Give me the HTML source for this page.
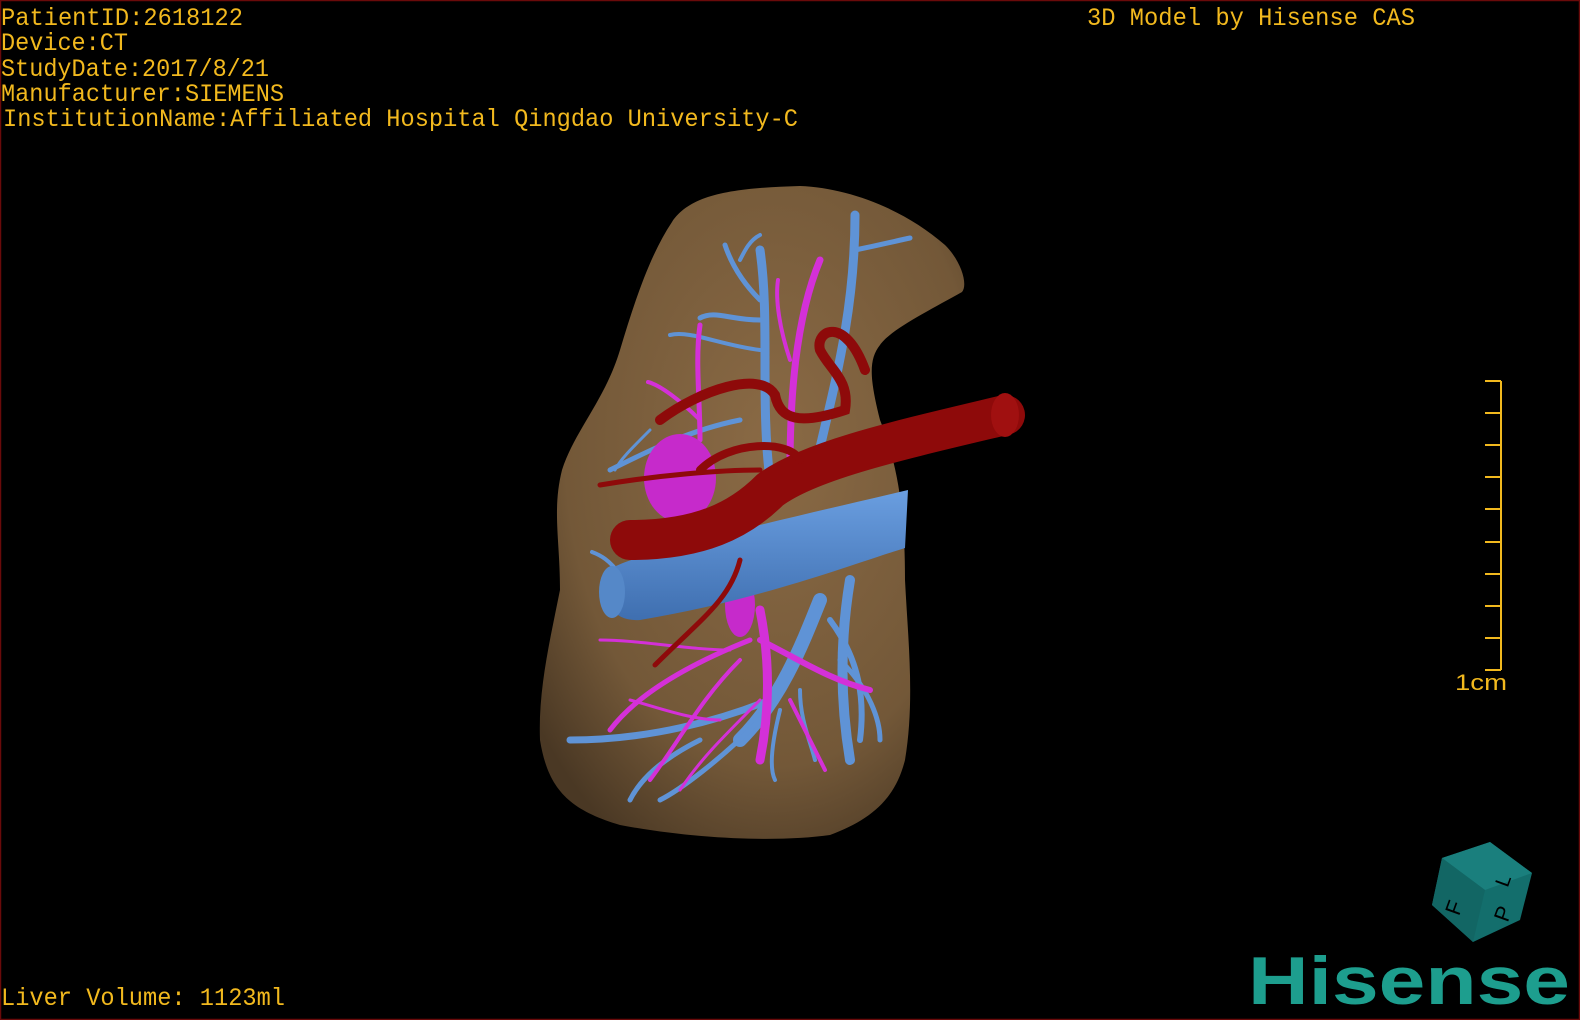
<!DOCTYPE html>
<html><head><meta charset="utf-8"><style>
html,body{margin:0;padding:0;background:#000;width:1580px;height:1020px;overflow:hidden}
svg{display:block}
.t{font-family:"Liberation Mono",monospace;font-size:25px;fill:#f2b91e}
</style></head><body>
<svg width="1580" height="1020" viewBox="0 0 1580 1020" xmlns="http://www.w3.org/2000/svg">
<defs>
<radialGradient id="lv" cx="0.55" cy="0.4" r="0.7">
<stop offset="0" stop-color="#8a6a45"/><stop offset="0.7" stop-color="#735838"/><stop offset="1" stop-color="#4a3824"/>
</radialGradient>
<linearGradient id="bt" x1="0" y1="0" x2="0" y2="1">
<stop offset="0" stop-color="#6a9ee0"/><stop offset="1" stop-color="#3f6fb0"/></linearGradient>
</defs>
<rect x="0.5" y="0.5" width="1579" height="1019" fill="#000" stroke="#6a0a0a" stroke-width="1.5"/>
<path d="M672,222 C690,195 730,188 800,186 C850,188 905,210 945,245 C962,262 968,285 962,292 C930,310 890,330 880,345 C868,360 870,380 880,420 C900,470 905,520 905,580 C908,640 915,700 905,760 C895,800 870,820 830,835 C780,842 700,840 620,825 C570,810 548,790 540,740 C538,690 550,640 560,590 C560,540 552,510 562,470 C575,430 605,400 620,350 C635,300 650,255 672,222 Z" fill="url(#lv)"/>
<g stroke="#5f93d6" fill="none" stroke-linecap="round">
<path d="M770,480 C760,400 770,320 760,250" stroke-width="9"/>
<path d="M815,470 C830,400 855,320 855,215" stroke-width="9"/>
<path d="M855,250 C880,245 900,240 910,238" stroke-width="5"/>
<path d="M760,300 C740,280 730,260 725,245" stroke-width="5"/>
<path d="M760,320 C730,320 715,310 700,318" stroke-width="5"/>
<path d="M760,350 C720,345 690,330 670,335" stroke-width="4"/>
<path d="M740,420 C690,430 650,450 610,470" stroke-width="5"/>
<path d="M820,600 C800,650 780,700 740,740" stroke-width="14"/>
<path d="M850,580 C840,640 840,700 850,760" stroke-width="10"/>
<path d="M770,700 C720,720 650,740 570,740" stroke-width="7"/>
<path d="M760,720 C720,760 680,790 660,800" stroke-width="5"/>
<path d="M840,660 C870,690 880,720 880,740" stroke-width="5"/>
<path d="M780,710 C770,750 770,770 775,780" stroke-width="4"/>
<path d="M700,740 C660,760 640,780 630,800" stroke-width="5"/>
<path d="M620,575 C610,560 600,555 592,552" stroke-width="4"/>
<path d="M830,620 C860,660 865,700 860,740" stroke-width="6"/>
<path d="M800,690 C800,720 810,740 815,760" stroke-width="4"/>
<path d="M740,260 C745,250 750,240 760,235" stroke-width="4"/>
<path d="M650,430 C630,450 620,460 615,470" stroke-width="3"/>
</g>
<g stroke="#d430d8" fill="none" stroke-linecap="round">
<path d="M790,470 C790,400 795,320 820,260" stroke-width="7"/>
<path d="M790,360 C780,330 775,300 778,280" stroke-width="4"/>
<path d="M700,440 C700,400 695,360 700,325" stroke-width="5"/>
<path d="M700,420 C680,400 660,385 648,382" stroke-width="4"/>
<path d="M760,610 C770,660 770,710 760,760" stroke-width="9"/>
<path d="M760,640 C800,660 830,680 870,690" stroke-width="6"/>
<path d="M750,640 C700,660 640,690 610,730" stroke-width="5"/>
<path d="M740,660 C700,700 680,740 650,780" stroke-width="4"/>
<path d="M730,650 C690,650 640,640 600,640" stroke-width="3"/>
<path d="M760,700 C720,740 700,760 680,790" stroke-width="3"/>
<path d="M790,700 C810,740 820,760 825,770" stroke-width="4"/>
<path d="M720,720 C690,720 650,705 630,700" stroke-width="3"/>
</g>
<ellipse cx="680" cy="478" rx="36" ry="44" fill="#c62acb"/>
<ellipse cx="740" cy="605" rx="15" ry="32" fill="#c62acb"/>
<path d="M612,568 C640,552 780,520 908,490 L905,548 C850,565 760,600 640,620 C612,622 598,600 612,568 Z" fill="url(#bt)"/>
<ellipse cx="612" cy="592" rx="13" ry="26" fill="#5588c8"/>
<g stroke="#8e0a0a" fill="none" stroke-linecap="round">
<path d="M630,540 C700,540 740,520 770,490 C810,460 900,440 1005,415" stroke-width="40"/>
<path d="M660,420 C700,390 760,370 775,395 C780,420 800,425 845,410 C850,380 830,370 820,350 C815,330 845,315 865,370" stroke-width="10"/>
<path d="M700,470 C730,440 790,440 800,460" stroke-width="8"/>
<path d="M600,485 C660,475 720,470 760,470" stroke-width="5"/>
<path d="M740,560 C730,600 700,620 655,665" stroke-width="5"/>
</g>
<ellipse cx="1005" cy="415" rx="14" ry="22" fill="#a01010"/>
<text class="t" x="1" y="25" textLength="242" lengthAdjust="spacingAndGlyphs">PatientID:2618122</text>
<text class="t" x="1" y="50" textLength="127" lengthAdjust="spacingAndGlyphs">Device:CT</text>
<text class="t" x="1" y="76" textLength="268" lengthAdjust="spacingAndGlyphs">StudyDate:2017/8/21</text>
<text class="t" x="1" y="101" textLength="283" lengthAdjust="spacingAndGlyphs">Manufacturer:SIEMENS</text>
<text class="t" x="3" y="126" textLength="795" lengthAdjust="spacingAndGlyphs">InstitutionName:Affiliated Hospital Qingdao University-C</text>
<text class="t" x="1087" y="25" textLength="328" lengthAdjust="spacingAndGlyphs">3D Model by Hisense CAS</text>
<text class="t" x="1" y="1005" textLength="284" lengthAdjust="spacingAndGlyphs">Liver Volume: 1123ml</text>
<g stroke="#f2b91e" stroke-width="2" fill="none">
<path d="M1501,381 V670"/>
<path d="M1485,381H1501M1485,413H1501M1485,445H1501M1485,477H1501M1485,509H1501M1485,542H1501M1485,574H1501M1485,606H1501M1485,638H1501M1485,670H1501"/>
</g>
<text x="1455" y="690" font-family="Liberation Sans,sans-serif" font-size="22" fill="#f2b91e" textLength="52" lengthAdjust="spacingAndGlyphs">1cm</text>
<polygon points="1490,842 1532,873 1520,920 1473,942 1432,905 1442,858" fill="#136e6c"/>
<polygon points="1442,858 1490,842 1532,873 1485,890" fill="#1a7f7d"/>
<polygon points="1442,858 1485,890 1473,942 1432,905" fill="#126664"/>
<text x="1450" y="920" font-family="Liberation Sans,sans-serif" font-size="22" fill="#000" transform="rotate(-70 1452 912)">F</text>
<text x="1495" y="925" font-family="Liberation Sans,sans-serif" font-size="22" fill="#000" transform="rotate(-70 1500 915)">P</text>
<text x="1495" y="890" font-family="Liberation Sans,sans-serif" font-size="20" fill="#000" transform="rotate(-70 1500 880)">L</text>
<text x="1248" y="1004" font-family="Liberation Sans,sans-serif" font-weight="bold" font-size="68" fill="#1d9e8e" textLength="322" lengthAdjust="spacingAndGlyphs">Hisense</text>
</svg>
</body></html>
